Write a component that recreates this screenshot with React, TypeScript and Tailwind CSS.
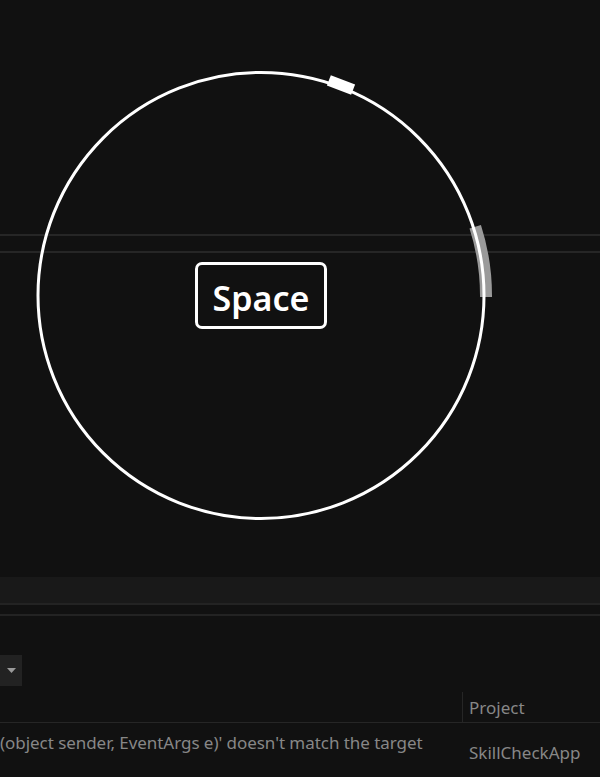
import React from 'react';

const CX = 261;
const CY = 295.5;
const R = 223;

function arcPoint(deg: number, r: number) {
  const a = (deg * Math.PI) / 180;
  return [CX + r * Math.cos(a), CY - r * Math.sin(a)];
}

function ProgressRing() {
  const [x1, y1] = arcPoint(17.8, 225);
  const [x2, y2] = arcPoint(-0.4, 225);
  return (
    <svg width="600" height="577" className="absolute left-0 top-0">
      {/* travelled segment */}
      <path d={`M ${x1} ${y1} A 225 225 0 0 1 ${x2} ${y2}`} stroke="#9a9a9a" strokeWidth="12" fill="none" />
      <circle cx={CX} cy={CY} r={R} stroke="#ffffff" strokeWidth="3" fill="none" />
      {/* current position marker */}
      <rect x={341 - 13} y={85 - 5.5} width="26" height="11" fill="#ffffff" transform="rotate(21 341 85)" />
    </svg>
  );
}

export default function App() {
  return (
    <div className="w-[600px] h-[777px] bg-[#111111] overflow-hidden flex flex-col font-['Noto_Sans',sans-serif]">
      {/* Canvas */}
      <div className="relative h-[577px] flex flex-col">
        <div className="h-[234px]" />
        <div className="h-[2px] bg-[#262626]" />
        <div className="h-[15px]" />
        <div className="h-[2px] bg-[#262626]" />
        <ProgressRing />
        <div className="absolute left-[195px] top-[262px] w-[132px] h-[67px] rounded-[7px] border-[3px] border-white flex items-center justify-center">
          <span className="text-white text-[34px] font-semibold leading-none pt-[5px]">Space</span>
        </div>
      </div>

      {/* Status band */}
      <div className="h-[26px] bg-[#191919]" />
      <div className="h-[2px] bg-[#232323]" />
      <div className="h-[9px]" />
      <div className="h-[2px] bg-[#232323]" />

      {/* Error list */}
      <div className="flex-1 flex flex-col text-[#878787] text-[17px]">
        <div className="h-[39px]" />
        <div className="w-[22px] h-[31px] bg-[#222222] flex items-center justify-center">
          <svg width="9" height="5" viewBox="0 0 9 5">
            <path d="M0 0 H9 L4.5 5 Z" fill="#9a9a9a" />
          </svg>
        </div>
        <div className="h-[6px]" />
        <div className="flex h-[31px] border-b border-[#262626]">
          <div className="w-[462px]" />
          <div className="border-l border-[#262626] pl-[6px] flex items-center leading-none">Project</div>
        </div>
        <div className="flex">
          <div className="w-[463px] whitespace-nowrap leading-none pt-[11px] tracking-[-0.05px]">(object sender, EventArgs e)' doesn't match the target</div>
          <div className="pl-[6px] pt-[21px] leading-none">SkillCheckApp</div>
        </div>
      </div>
    </div>
  );
}
